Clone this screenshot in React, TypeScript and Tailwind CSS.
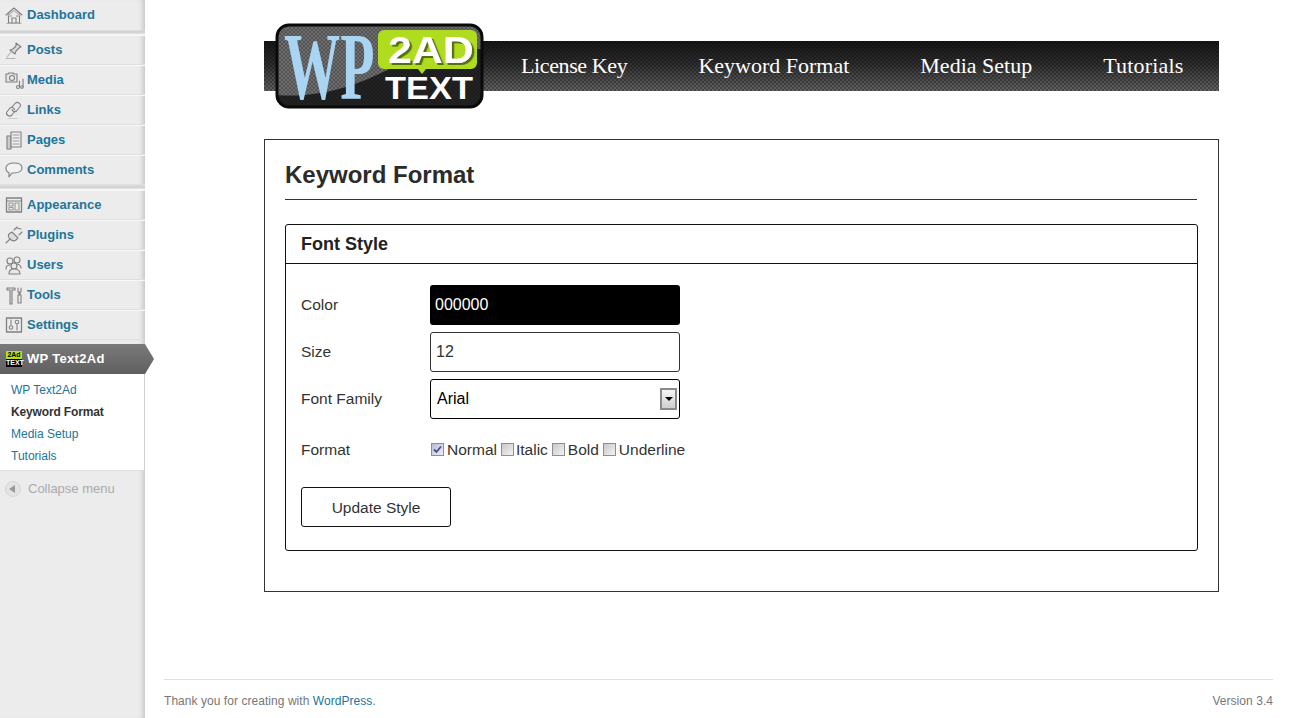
import type { ReactNode } from 'react';

const sans = 'font-["Liberation_Sans",Arial,sans-serif]';
const navBg =
  '[background:repeating-conic-gradient(#0000004d_0_25%,#0000_0_50%)_0_0/4px_4px,linear-gradient(#161616,#2e2e2e_45%,#636363)]';

// Small grey admin menu icons, drawn on a 20x20 box
function Ico({ children }: { children: ReactNode }) {
  return (
    <svg viewBox="0 0 20 20" className="h-5 w-5 shrink-0" fill="none" stroke="#808080" strokeWidth="1.1" strokeLinejoin="round" strokeLinecap="round">
      {children}
    </svg>
  );
}

const icons: Record<string, ReactNode> = {
  Dashboard: (
    <Ico>
      <path d="M2 10 10 3l8 7M4.500 9v9h11V9M8 18v-5h4v5M6 11h1.500M12.500 11H14" />
      <path d="M4 10.500 10 5.500l6 5" stroke="#b5b5b5" />
      <path d="M3 18.500h14" stroke="#aaa" />
    </Ico>
  ),
  Posts: (
    <Ico>
      <path d="m12 3 5 4-2 1-3 3-1 3-5-4 3-1 3-3z" fill="#ddd" />
      <path d="m7 12-4 5M2 18.500h9" stroke="#b5b5b5" />
    </Ico>
  ),
  Media: (
    <Ico>
      <path d="M2 4h2l1-1h4l1 1h3v8H2z" fill="#e6e6e6" />
      <circle cx="8" cy="8" r="2.500" />
      <circle cx="14" cy="17" r="1.500" />
      <circle cx="18" cy="17" r="1.300" />
      <path d="M15.500 16.500V11M19 16.500V9" />
    </Ico>
  ),
  Links: (
    <Ico>
      <path d="m8 7 3.500-4c2-1.500 5.500.5 5 3l-4 5c-1.500 1.500-4 .5-4.500-1.500" />
      <path d="m11 11-3.500 4.500c-2 1.500-5.500-.5-5-3L6 8c1.500-1.500 4-.5 4.500 1.500" />
      <path d="M4 18.500h9" stroke="#ccc" />
    </Ico>
  ),
  Pages: (
    <Ico>
      <path d="M3 6h4v13H3z" fill="#ccc" />
      <path d="M7 2h10v15H7z" fill="#eee" />
      <path d="M9 5h6M9 8h6M9 11h6M9 14h6" stroke="#999" />
    </Ico>
  ),
  Comments: (
    <Ico>
      <path d="M10 3c5 0 8 2 8 5s-3 5-8 5H8l-3 4v-4.500C3 12 2 10 2 8c0-3 3-5 8-5z" fill="#f2f2f2" />
    </Ico>
  ),
  Appearance: (
    <Ico>
      <path d="M2.500 3h15v14h-15z" strokeWidth="1.300" />
      <path d="M3 6h14" />
      <path d="M5 8h4v3H5zM5 12.500h4v2.500H5zM11 8h4v7h-4z" stroke="#999" />
    </Ico>
  ),
  Plugins: (
    <Ico>
      <path d="m8 7 6 6-2 2c-2 1.500-4 1-6-1s-2-4-.5-5.500z" fill="#ddd" />
      <path d="m10 5 3-3M15 10l3-3M6 14l-4 4M13 3l4 1" />
    </Ico>
  ),
  Users: (
    <Ico>
      <circle cx="6" cy="6" r="3" />
      <circle cx="13" cy="5" r="3" />
      <path d="M2 14c0-3 2-4 4-4M11 9c3 0 6 1 6 4" />
      <circle cx="10" cy="11" r="3" fill="#e8e8e8" />
      <path d="M5 19c0-4 2-5 5-5s6 1 6 5z" fill="#e8e8e8" />
    </Ico>
  ),
  Tools: (
    <Ico>
      <path d="M3 3h8v2H8v14H6V5H3z" fill="#ddd" />
      <path d="M14 3v4h1v3h-1v8h3v-8h-1V7h1V3" />
    </Ico>
  ),
  Settings: (
    <Ico>
      <path d="M2.500 3h15v14h-15z" strokeWidth="1.300" />
      <path d="M7 5v5M13 9v6" />
      <circle cx="7" cy="12.500" r="1.800" />
      <circle cx="13" cy="7" r="1.800" />
    </Ico>
  ),
};

function Item({ label, first }: { label: string; first?: boolean }) {
  return (
    <a className={`flex h-[30px] items-center gap-[3px] pl-[4px] text-[13px] font-bold text-[#21759b] ${first ? 'border-b-0' : 'border-t border-t-[#f7f7f7] border-b border-b-[#dfdfdf]'}`}>
      {icons[label]}
      <span>{label}</span>
    </a>
  );
}

function Separator() {
  return <div className="h-[5px] border-b border-b-[#f7f7f7] bg-[linear-gradient(#e0e0e0,#cfcfcf_50%,#e6e6e6)]" />;
}

function Sidebar() {
  return (
    <aside className="relative w-[145px] shrink-0 bg-[#ececec] shadow-[inset_-5px_0_5px_-3px_rgba(0,0,0,0.18)]">
      <Item label="Dashboard" first />
      <Separator />
      {['Posts', 'Media', 'Links', 'Pages', 'Comments'].map((l) => <Item key={l} label={l} />)}
      <Separator />
      {['Appearance', 'Plugins', 'Users', 'Tools', 'Settings'].map((l) => <Item key={l} label={l} />)}
      <div className="mt-[4px] flex h-[30px] w-[154px] items-center gap-[5px] bg-[linear-gradient(#7a7a7a,#5f5f5f)] pl-[6px] text-[13px] font-bold tracking-[0.3px] text-white [clip-path:polygon(0_0,145px_0,154px_15px,145px_100%,0_100%)]">
        <span className="flex h-[16px] w-[16px] shrink-0 flex-col bg-black text-center text-[7px] font-bold leading-[8px] tracking-normal">
          <span className="bg-[#b4e01c] text-black">2Ad</span>
          <span className="text-white">TEXT</span>
        </span>
        <span>WP Text2Ad</span>
      </div>
      <ul className="mr-[1px] border-b border-b-[#dfdfdf] bg-white pt-[5px] pb-[3px] pl-[11px] text-[12px] leading-[22px] text-[#21759b]">
        <li>WP Text2Ad</li>
        <li className="font-bold tracking-[-0.15px] text-[#333]">Keyword Format</li>
        <li>Media Setup</li>
        <li>Tutorials</li>
      </ul>
      <div className="mt-[8px] flex items-center gap-[7px] pl-[5px] text-[13px] text-[#aaa]">
        <span className="flex h-[16px] w-[16px] items-center justify-center rounded-full border border-[#d5d5d5] bg-[#e4e4e4]">
          <span className="mr-[2px] h-0 w-0 border-y-[4px] border-r-[6px] border-y-transparent border-r-[#999]" />
        </span>
        Collapse menu
      </div>
    </aside>
  );
}

function Logo() {
  return (
    <svg viewBox="0 0 210 90" className="-my-[20px] h-[90px] w-[210px] shrink-0 overflow-visible">
      <defs>
        <pattern id="chk" width="4" height="4" patternUnits="userSpaceOnUse">
          <rect width="2" height="2" fill="#00000040" />
          <rect x="2" y="2" width="2" height="2" fill="#00000040" />
        </pattern>
        <clipPath id="inner">
          <rect x="1" y="3" width="207" height="84" rx="13" />
        </clipPath>
        <filter id="sh" x="-10%" y="-10%" width="120%" height="130%">
          <feDropShadow dx="2" dy="2" stdDeviation="0.6" floodColor="#54700a" />
        </filter>
      </defs>
      <rect x="1" y="3" width="207" height="84" rx="13" fill="#6e6e6e" />
      <path d="M1 74C50 78 90 60 110 50c30-14 70-22 98-22v62H1z" fill="#242424" clipPath="url(#inner)" />
      <rect x="1" y="3" width="207" height="84" rx="13" fill="url(#chk)" />
      <rect x="2" y="4" width="205" height="82" rx="12" fill="none" stroke="#0a0a0a" strokeWidth="3" />
      <text transform="translate(9 78) scale(1.04 1.75)" fontFamily="Liberation Serif, serif" fontWeight="700" fontSize="54" fill="#a9d5f2">WP</text>
      <path d="M109 9h87a6 6 0 0 1 6 6v27a6 6 0 0 1-6 6h-45l-4 5-4-5h-34a6 6 0 0 1-6-6V15a6 6 0 0 1 6-6z" fill="#b0dc20" />
      <text transform="translate(113 42) scale(1.16 1)" filter="url(#sh)" fontFamily="Liberation Sans, sans-serif" fontWeight="700" fontSize="37" fill="#fff">2AD</text>
      <text transform="translate(110 78) scale(1.11 1)" fontFamily="Liberation Sans, sans-serif" fontWeight="700" fontSize="31" fill="#fff">TEXT</text>
    </svg>
  );
}

function Header() {
  return (
    <div className={`flex h-[50px] items-center pl-[11px] ${navBg}`}>
      <Logo />
      <nav className="flex gap-[71px] pb-[1px] pl-[36px] font-['Liberation_Serif',Georgia,serif] text-[22px] text-white">
        <a className="tracking-[-0.38px]">License Key</a>
        <a>Keyword Format</a>
        <a>Media Setup</a>
        <a className="tracking-[0.2px]">Tutorials</a>
      </nav>
    </div>
  );
}

function Check({ checked, label, className }: { checked?: boolean; label: string; className?: string }) {
  return (
    <label className={`flex items-center ${className ?? ''}`}>
      <span className={`flex h-[13px] w-[13px] items-center justify-center border border-[#8e8e8e] ${checked ? 'bg-[linear-gradient(135deg,#b9bbd6,#eeeef6)]' : 'bg-[linear-gradient(135deg,#c9c9c9,#f2f2f2)]'}`}>
        {checked && (
          <svg viewBox="0 0 11 11" className="h-[11px] w-[11px]" fill="none" stroke="#44508f" strokeWidth="1.800">
            <path d="m2 5.500 2.500 2.500L9 2.500" />
          </svg>
        )}
      </span>
      <span>{label}</span>
    </label>
  );
}

function Field({ label, children, className }: { label: string; children: ReactNode; className?: string }) {
  return (
    <div className={`flex items-center ${className ?? ''}`}>
      <div className="w-[129px] shrink-0 text-[15.5px] text-[#333]">{label}</div>
      {children}
    </div>
  );
}

function FontStyleBox() {
  return (
    <section className="mt-[24px] mr-[20px] h-[327px] rounded-[3px] border border-[#111]">
      <h3 className="flex h-[39px] items-center border-b border-b-[#111] pl-[15px] text-[18px] font-bold text-[#222]">Font Style</h3>
      <div className="pt-[21px] pl-[15px]">
        <Field label="Color">
          <input readOnly value="000000" className="h-[40px] w-[250px] rounded-[3px] bg-black pl-[5px] text-[16px] text-white outline-none" />
        </Field>
        <Field label="Size" className="mt-[7px]">
          <input readOnly value="12" className="h-[40px] w-[250px] rounded-[3px] border border-[#333] pl-[5px] text-[16px] text-[#333] outline-none" />
        </Field>
        <Field label="Font Family" className="mt-[7px]">
          <div className="relative flex h-[40px] w-[250px] items-center rounded-[3px] border border-black pl-[6px] text-[16px] text-black">
            Arial
            <span className="absolute top-[8px] right-[2px] flex h-[22px] w-[17px] items-center justify-center border-2 border-[#8a8a8a] bg-[linear-gradient(#f5f5f5,#cfcfcf)]">
              <span className="h-0 w-0 border-x-[4px] border-t-[4px] border-x-transparent border-t-black" />
            </span>
          </div>
        </Field>
        <Field label="Format" className="mt-[19px]">
          <div className="ml-[1px] flex items-center text-[15.5px] leading-[20px] text-[#333]">
            <Check checked label="Normal" className="gap-[3px]" />
            <Check label="Italic" className="ml-[4px] gap-[2px]" />
            <Check label="Bold" className="ml-[4px] gap-[3px]" />
            <Check label="Underline" className="ml-[4px] gap-[3px]" />
          </div>
        </Field>
        <button className="mt-[26px] h-[40px] w-[150px] rounded-[3px] border border-[#111] text-[15.5px] text-[#333]">Update Style</button>
      </div>
    </section>
  );
}

export default function App() {
  return (
    <div className={`flex h-[718px] overflow-hidden bg-white ${sans}`}>
      <Sidebar />
      <main className="flex min-w-0 flex-1 flex-col pr-[19px] pl-[19px]">
        <div className="mr-[54px] ml-[100px] pt-[41px]">
          <Header />
          <div className="mt-[48px] h-[453px] border border-[#333] pt-[20px] pl-[20px]">
            <h2 className="mr-[21px] h-[40px] border-b border-b-[#333] text-[24px] leading-[30px] font-bold text-[#2b2b2b]">Keyword Format</h2>
            <FontStyleBox />
          </div>
        </div>
        <footer className="mt-[87px] flex justify-between border-t border-t-[#dfdfdf] pt-[12px] text-[12px] tracking-[0.05px] text-[#777]">
          <span>
            Thank you for creating with <a className="text-[#21759b]">WordPress</a>.
          </span>
          <span>Version 3.4</span>
        </footer>
      </main>
    </div>
  );
}
